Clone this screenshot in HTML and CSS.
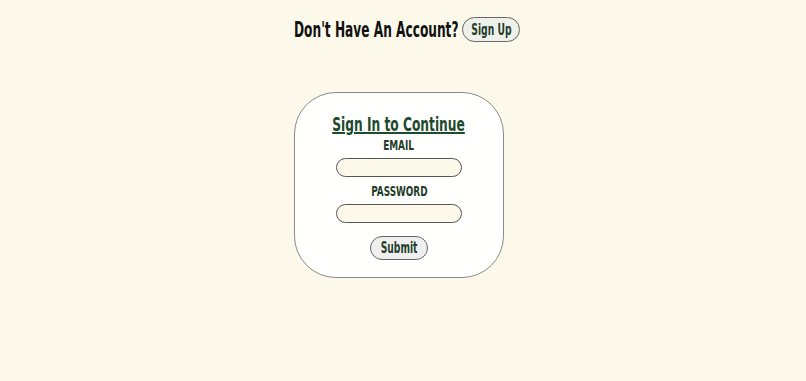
FILE: index.html
```html
<!DOCTYPE html>
<html lang="en">
<head>
  <meta charset="UTF-8" />
  <title>Sign In</title>
  <link rel="stylesheet" href="styles.css">
</head>
<body>
  <div class="top">
    <span class="question">Don't Have An Account?</span>
    <button class="signup"><span class="squash">Sign Up</span></button>
  </div>

  <form class="card">
    <h2>Sign In to Continue</h2>
    <label for="email">EMAIL</label>
    <input id="email" type="email" />
    <label for="password">PASSWORD</label>
    <input id="password" type="password" />
    <button type="button" class="submit"><span class="squash">Submit</span></button>
  </form>
</body>
</html>
```

FILE: styles.css
```css
body {
  margin: 0;
  background: #fcf9ea;
  font-family: 'DejaVu Sans Condensed', 'DejaVu Sans', sans-serif;
  font-weight: bold;
  color: #1f3d2a;
}
/* no narrow display font installed, so squeeze the condensed one */
.squash,
.question,
.card h2,
.card label {
  display: inline-block;
  white-space: nowrap;
  transform: scaleX(0.68);
}
.top {
  display: flex;
  justify-content: center;
  align-items: center;
  gap: 5px;
  padding: 17px 0 0 8px;
}
.question {
  width: 163px;
  font-size: 20.5px;
  color: #111;
  transform: scaleX(0.66);
  transform-origin: left center;
}
.signup,
.submit {
  display: flex;
  justify-content: center;
  align-items: center;
  width: 58px;
  padding: 0;
  font-family: inherit;
  font-weight: bold;
  font-size: 15px;
  color: #1f3d2a;
  border: 1px solid #666;
}
.signup {
  height: 25px;
  font-size: 16px;
  background: #eef0ea;
  border-radius: 13px;
}
.signup .squash {
  transform: scaleX(0.64);
}
.card {
  width: 208px;
  height: 184px;
  margin: 50px 0 0 calc(50% - 109px);
  background: #fffffe;
  border: 1px solid #8a8a8a;
  border-radius: 42px;
  display: flex;
  flex-direction: column;
  align-items: center;
}
.card h2 {
  margin: 19px 0 0;
  font-size: 20px;
  line-height: 24px;
  color: #1e4a2e;
  text-decoration: underline;
}
.card label {
  font-size: 14.5px;
  line-height: 18px;
}
.card input {
  width: 124px;
  height: 17px;
  margin: 4px 0 5px;
  padding: 0;
  background: #fcf9ea;
  border: 1px solid #555;
  border-radius: 10px;
}
.submit {
  height: 24px;
  margin-top: 8px;
  background: #efefef;
  border-radius: 12px;
}
```
